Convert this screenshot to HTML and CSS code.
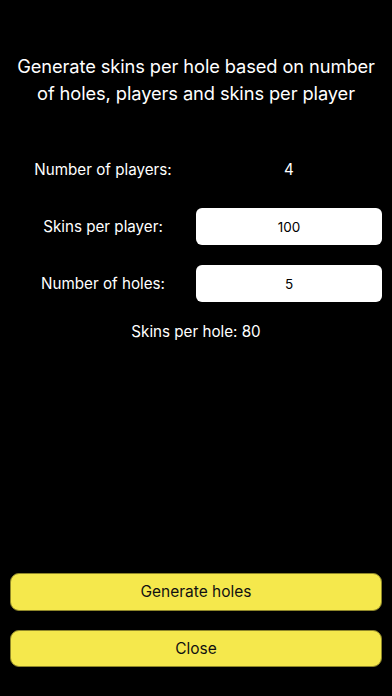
FILE: index.html
```html
<!DOCTYPE html>
<html>
<head>
<meta charset="utf-8">
<link rel="stylesheet" href="styles.css">
</head>
<body>
<div class="screen">
  <p class="title">Generate skins per hole based on number of holes, players and skins per player</p>
  <div class="form">
    <div class="row">
      <div class="label">Number of players:</div>
      <div class="value">4</div>
    </div>
    <div class="row">
      <div class="label">Skins per player:</div>
      <div class="field">100</div>
    </div>
    <div class="row">
      <div class="label">Number of holes:</div>
      <div class="field">5</div>
    </div>
    <div class="result">Skins per hole: 80</div>
  </div>
  <div class="spacer"></div>
  <div class="actions">
    <div class="btn">Generate holes</div>
    <div class="btn">Close</div>
  </div>
</div>
</body>
</html>
```

FILE: styles.css
```css
html, body {
  margin: 0;
  padding: 0;
  background: #000;
}
body {
  font-family: Inter, "Liberation Sans", sans-serif;
  color: #fff;
}
.screen {
  height: 696px;
  box-sizing: border-box;
  padding: 0 10px 29px;
  display: flex;
  flex-direction: column;
}
.title {
  margin: 53px 0 0;
  font-size: 18.3px;
  line-height: 27px;
  text-align: center;
  letter-spacing: -0.1px;
}
.form {
  margin-top: 44px;
  display: flex;
  flex-direction: column;
  gap: 20px;
}
.row {
  display: grid;
  grid-template-columns: 1fr 1fr;
  height: 37px;
  align-items: center;
}
.label, .value {
  text-align: center;
  font-size: 15.2px;
}
.field {
  height: 37px;
  background: #fff;
  border-radius: 6px;
  color: #000;
  font-size: 13.5px;
  display: flex;
  align-items: center;
  justify-content: center;
}
.result {
  text-align: center;
  font-size: 15.2px;
  line-height: 20px;
  margin-top: 0;
}
.spacer {
  flex: 1;
}
.actions {
  display: flex;
  flex-direction: column;
  gap: 19px;
}
.btn {
  height: 37.5px;
  background: #f5e84c;
  border: 1px solid #8f8729;
  box-sizing: border-box;
  border-radius: 9px;
  color: #111;
  font-size: 15.5px;
  display: flex;
  align-items: center;
  justify-content: center;
}
```
